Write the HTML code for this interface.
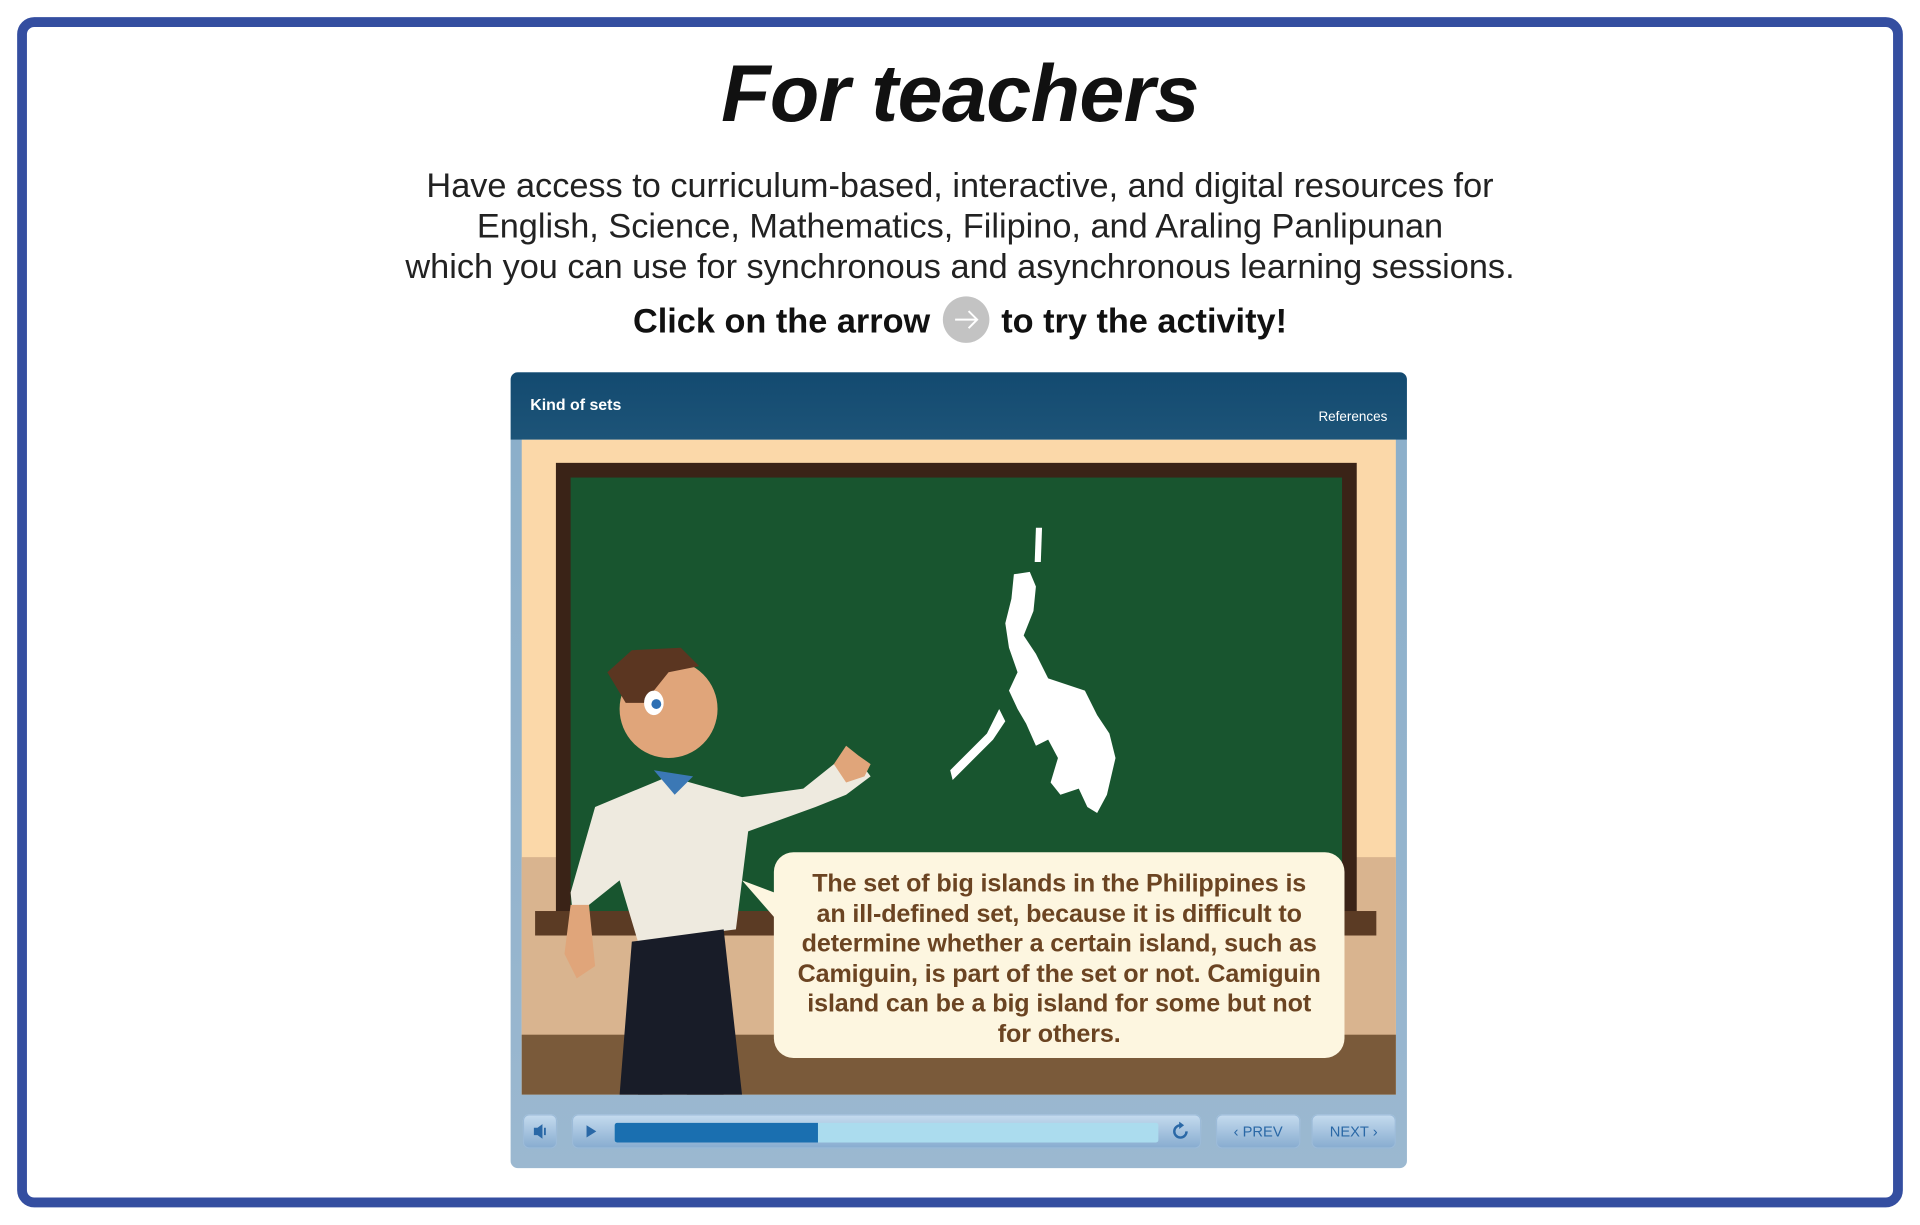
<!DOCTYPE html>
<html><head><meta charset="utf-8"><style>
html,body{margin:0;padding:0;background:#fff;width:1920px;height:1225px;overflow:hidden}
#s{position:absolute;left:0;top:0;width:1568px;height:1000px;transform:scale(1.22449);transform-origin:0 0;font-family:"Liberation Sans",sans-serif}
.frame{position:absolute;left:14px;top:14px;width:1524px;height:956px;border:8px solid #344ea0;border-radius:14px}
h1{position:absolute;left:0;width:1568px;top:38px;margin:0;text-align:center;font-size:66px;font-style:italic;font-weight:bold;color:#111;letter-spacing:-0.5px}
.p{position:absolute;left:0;width:1568px;top:135px;text-align:center;font-size:28px;line-height:33px;color:#222}
.c{position:absolute;left:0;width:1568px;top:245px;text-align:center;font-size:28px;font-weight:bold;color:#111;line-height:34px}
.c .dot{display:inline-block;width:38px;height:38px;border-radius:50%;background:#c3c3c3;vertical-align:middle;margin:0 10px;position:relative;top:-3px}
.pl{position:absolute;left:417px;top:304px;width:732px;height:650px;border-radius:6px;overflow:hidden;background:linear-gradient(#8aaec9,#9bb8d0)}
.hd{position:absolute;left:0;top:0;width:732px;height:55px;background:linear-gradient(#134a70,#1d5478)}
.btn{position:absolute;top:606px;height:28px;border-radius:5px;background:linear-gradient(#c6dcef,#86abcf);box-shadow:inset 0 0 0 1px #9cbbd8;color:#2a68a6;font-size:12px;line-height:28px;text-align:center}
</style></head><body><div id="s">
<div class="frame"></div>
<h1>For teachers</h1>
<div class="p">Have access to curriculum-based, interactive, and digital resources for<br>English, Science, Mathematics, Filipino, and Araling Panlipunan<br>which you can use for synchronous and asynchronous learning sessions.</div>
<div class="c">Click on the arrow<span class="dot"><svg width="38" height="38" viewBox="0 0 38 38"><path d="M10 19H28M21 12L28 19L21 26" stroke="#fff" stroke-width="1.6" fill="none"/></svg></span>to try the activity!</div>
<div class="pl">
 <div class="hd"><div style="position:absolute;left:16px;top:19px;color:#fff;font-weight:bold;font-size:13px">Kind of sets</div><div style="position:absolute;right:16px;top:31px;color:#fff;font-size:11px">References</div></div>
 <svg style="position:absolute;left:9px;top:55px" width="714" height="535" viewBox="0 0 714 535">
  <rect width="714" height="535" fill="#fbd8a9"/>
  <rect y="341" width="714" height="150" fill="#d9b48f"/>
  <rect y="486" width="714" height="49" fill="#7a5a3a"/>
  <rect x="28" y="19" width="654" height="370" fill="#3a2317"/>
  <rect x="40" y="31" width="630" height="356" fill="#18552f"/>
  <rect x="11" y="385" width="687" height="20" fill="#5b3b24"/>
  <g fill="#fff">
   <path d="M402 110L415 108L420 120L418 140L410 160L420 175L430 195L445 200L460 205L470 225L480 240L485 260L478 290L470 305L462 300L455 285L440 290L432 280L438 260L430 245L420 250L412 232L405 220L398 205L405 190L398 170L395 150L400 130Z"/>
   <path d="M390 220L380 240L365 255L350 270L352 278L368 262L385 245L395 230Z"/>
   <path d="M420 72L425 72L424 100L419 100Z"/>
  </g>
  <g>
   <path d="M95 535L110 420L140 420L165 535Z" fill="#181c28"/>
   <path d="M60 300L120 275L180 292L230 285L255 265L270 255L285 275L265 290L240 300L185 320L175 400L95 410L80 360L55 380L45 420L40 370Z" fill="#eeeadf"/>
   <path d="M90 410L165 400L180 535L135 535L128 470L115 535L80 535Z" fill="#181c28"/>
   <path d="M40 380L55 380L60 430L45 440L35 420Z" fill="#e0a57a"/>
   <circle cx="120" cy="220" r="40" fill="#e0a57a"/>
   <path d="M85 215L70 190L90 172L130 170L145 185L120 190L100 215Z" fill="#5b3621"/>
   <ellipse cx="108" cy="215" rx="8" ry="10" fill="#fff"/><circle cx="110" cy="216" r="4" fill="#2d6fb3"/>
   <path d="M108 270L125 290L140 275Z" fill="#3b78b5"/>
   <path d="M255 265L265 250L275 258L285 265L280 275L265 280Z" fill="#e0a57a"/>
  </g>
  <path d="M180 360L220 375L215 400Z" fill="#fdf6e0"/>
  <rect x="206" y="337" width="466" height="168" rx="16" fill="#fdf6e0"/>
 </svg>
 <div style="position:absolute;left:215px;top:406px;width:466px;text-align:center;color:#6b4422;font-weight:bold;font-size:20.5px;line-height:24.6px;white-space:nowrap;letter-spacing:-0.1px">The set of big islands in the Philippines is<br>an ill-defined set, because it is difficult to<br>determine whether a certain island, such as<br>Camiguin, is part of the set or not. Camiguin<br>island can be a big island for some but not<br>for others.</div>
 <div class="btn" style="left:10px;width:28px"><svg width="28" height="28"><path d="M9 11H12L16 8V20L12 17H9Z" fill="#2a68a6"/><path d="M18 11V17" stroke="#2a68a6" stroke-width="1.5"/></svg></div>
 <div class="btn" style="left:50px;width:514px">
  <svg style="position:absolute;left:10px;top:8px" width="12" height="12"><path d="M2 1L10 6L2 11Z" fill="#2a68a6"/></svg>
  <div style="position:absolute;left:35px;top:7px;width:444px;height:16px;background:#abdcee;border-radius:2px"></div>
  <div style="position:absolute;left:35px;top:7px;width:166px;height:16px;background:#1a6fb0;border-radius:2px 0 0 2px"></div>
  <svg style="position:absolute;left:489px;top:6px" width="16" height="16"><path d="M13 8A5 5 0 1 1 8 3" stroke="#2a68a6" stroke-width="2" fill="none"/><path d="M7 0L11 3L7 6Z" fill="#2a68a6"/></svg>
 </div>
 <div class="btn" style="left:576px;width:69px">‹ PREV</div>
 <div class="btn" style="left:654px;width:69px">NEXT ›</div>
</div>
</div></body></html>
